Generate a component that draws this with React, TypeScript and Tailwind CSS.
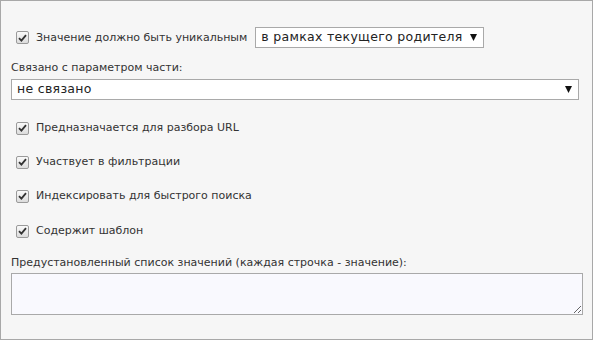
const font = { fontFamily: '"DejaVu Sans", Verdana, sans-serif' };

function Check() {
  return (
    <span className="flex h-[13px] w-[13px] items-center justify-center rounded-[2px] border border-[#9a9a9a] bg-gradient-to-b from-[#fafafa] to-[#dcdcdc]">
      <svg width="9" height="8" viewBox="0 0 9 8">
        <path d="M1 4.2 L3.4 6.6 L8 1.2" fill="none" stroke="#333" strokeWidth="1.8" />
      </svg>
    </span>
  );
}

function CheckRow({ label, className = "" }: { label: string; className?: string }) {
  return (
    <div className={`flex items-center gap-[7px] pl-[5px] ${className}`}>
      <Check />
      <span className="text-[11px] leading-[14px] text-[#333]">{label}</span>
    </div>
  );
}

function Arrow() {
  return (
    <svg width="7" height="7" viewBox="0 0 7 7">
      <path d="M0 0 H7 L3.5 7 Z" fill="#111" />
    </svg>
  );
}

export default function App() {
  return (
    <div
      className="flex h-[340px] w-[593px] flex-col border border-[#a8a8a8] bg-[#f6f6f6] pl-[10px] pr-[10px]"
      style={font}
    >
      <div className="mt-[26px] flex items-center">
        <CheckRow label="Значение должно быть уникальным" />
        <div className="ml-[8px] flex h-[21px] w-[229px] items-center justify-between border border-[#a9a9a9] bg-white pl-[5px] pr-[6px]">
          <span className="text-[12.5px] leading-none tracking-[0.3px] text-[#222]">
            в рамках текущего родителя
          </span>
          <Arrow />
        </div>
      </div>

      <div className="mt-[13px] text-[11px] leading-[14px] text-[#333]">Связано с параметром части:</div>
      <div className="mt-[4px] flex h-[21px] w-[568px] items-center justify-between border border-[#a9a9a9] bg-white pl-[5px] pr-[6px]">
        <span className="text-[12.5px] leading-none tracking-[0.3px] text-[#222]">не связано</span>
        <Arrow />
      </div>

      <CheckRow className="mt-[21px]" label="Предназначается для разбора URL" />
      <CheckRow className="mt-[20px]" label="Участвует в фильтрации" />
      <CheckRow className="mt-[20px]" label="Индексировать для быстрого поиска" />
      <CheckRow className="mt-[21px]" label="Содержит шаблон" />

      <div className="mt-[18px] text-[11px] leading-[14px] text-[#333]">
        Предустановленный список значений (каждая строчка - значение):
      </div>
      <textarea
        className="mt-[3px] h-[42px] w-[572px] border border-[#a9a9a9] bg-[#f9f9fe] outline-none"
        style={font}
      />
    </div>
  );
}
